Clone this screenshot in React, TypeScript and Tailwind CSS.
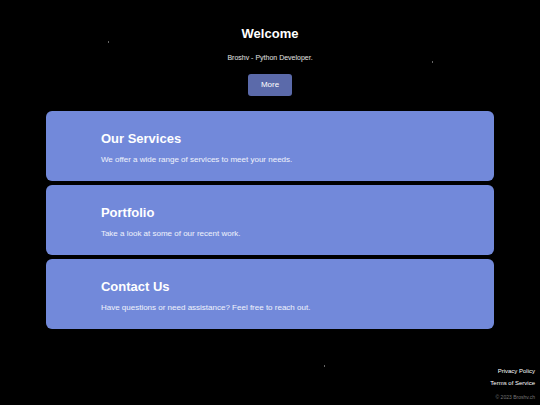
interface Section {
  title: string;
  text: string;
}

const SECTIONS: Section[] = [
  { title: 'Our Services', text: 'We offer a wide range of services to meet your needs.' },
  { title: 'Portfolio', text: 'Take a look at some of our recent work.' },
  { title: 'Contact Us', text: 'Have questions or need assistance? Feel free to reach out.' },
];

const STARS = [
  'left-[20%] top-[10%]',
  'left-[80%] top-[15%]',
  'left-[60%] top-[90%]',
];

const SectionCard = ({ title, text }: Section) => (
  <section className="rounded-md bg-[#7289da] px-[55px] pt-5 pb-4">
    <h2 className="text-[13px] leading-4 font-bold">{title}</h2>
    <p className="mt-2 text-[8px] leading-[10px] text-white/90">{text}</p>
  </section>
);

export default function App() {
  return (
    <div className="relative flex min-h-screen flex-col bg-black font-['Liberation_Sans',Arial,sans-serif] text-white">
      <div className="pointer-events-none absolute inset-0">
        {STARS.map((position) => (
          <span key={position} className={`absolute h-0.5 w-px bg-white/40 ${position}`} />
        ))}
      </div>

      <header className="flex flex-col items-center pt-[26px]">
        <h1 className="text-[13px] leading-4 font-bold">Welcome</h1>
        <p className="mt-[11px] text-[7px] leading-[10px] text-white/90">Broshv - Python Developer.</p>
        <button
          type="button"
          className="mt-[11px] rounded-[3px] bg-[#5b6aaa] px-[13px] py-1.5 text-[8px] leading-[10px]"
        >
          More
        </button>
      </header>

      <main className="mx-auto mt-[15px] flex w-[83%] flex-col gap-1">
        {SECTIONS.map((section) => (
          <SectionCard key={section.title} {...section} />
        ))}
      </main>

      <footer className="mt-auto flex flex-col items-end gap-0.5 px-[5px] pb-[3px] text-[6px] leading-[10px]">
        <a href="#privacy">Privacy Policy</a>
        <a href="#terms">Terms of Service</a>
        <p className="mt-0.5 text-[5px] text-[#777]">© 2023 Broshv.ch</p>
      </footer>
    </div>
  );
}
